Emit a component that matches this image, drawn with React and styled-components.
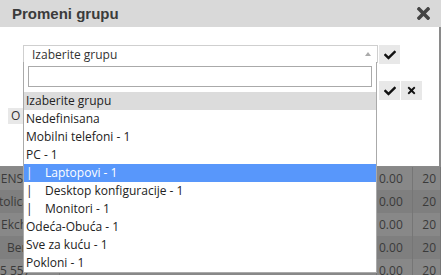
import React from "react";
import styled, { createGlobalStyle } from "styled-components";
import { FaCheck, FaTimes } from "react-icons/fa";

const GlobalStyle = createGlobalStyle`
  body {
    margin: 0;
    background: #8a8a8a;
    font-family: "Open Sans", "Liberation Sans", sans-serif;
    overflow: hidden;
  }
`;

const Page = styled.div`
  position: relative;
  width: 441px;
  height: 275px;
  overflow: hidden;
`;

const Table = styled.div`
  display: flex;
  flex-direction: column;
  padding-top: 167px;
`;

const Row = styled.div`
  display: grid;
  grid-template-columns: 60px 317px 36px 28px;
  height: 23px;
  background: ${({ $odd }) => ($odd ? "#7f7f7f" : "#888888")};
  color: #3a3a3a;
  font-size: 12px;
  line-height: 23px;
`;

const Cell = styled.div`
  overflow: hidden;
  white-space: nowrap;
  padding-left: 2px;
  border-right: 1px solid #767676;
  text-align: ${({ $right }) => ($right ? "right" : "left")};
  padding-right: ${({ $right }) => ($right ? "4px" : "0")};
`;

const Modal = styled.div`
  position: absolute;
  top: 0;
  left: 0;
  width: 439px;
  height: 166px;
  background: #fff;
  display: flex;
  flex-direction: column;
`;

const Header = styled.div`
  height: 27px;
  width: 441px;
  background: #d9d9d9;
  display: flex;
  align-items: center;
  justify-content: space-between;
  padding: 0 8px 0 12px;
  box-sizing: border-box;
`;

const Title = styled.h3`
  margin: 0;
  font-family: "Liberation Sans", Arial, sans-serif;
  font-size: 15px;
  font-weight: bold;
  color: #3b3b3b;
`;

const Close = styled.button`
  all: unset;
  display: flex;
  color: #444;
  font-size: 19px;
`;

const Body = styled.div`
  position: relative;
  padding: 18px 0 0 23px;
`;

const SelectRow = styled.div`
  display: flex;
  gap: 1px;
`;

const SelectBox = styled.div`
  width: 355px;
  height: 18px;
  border: 1px solid #cfcfcf;
  box-sizing: border-box;
  display: flex;
  align-items: center;
  justify-content: space-between;
  padding: 0 6px 0 8px;
  font-size: 12px;
  color: #333;
`;

const Arrow = styled.span`
  width: 0;
  height: 0;
  border-left: 3px solid transparent;
  border-right: 3px solid transparent;
  border-bottom: 4px solid #aaa;
`;

const IconBtn = styled.button`
  all: unset;
  width: 21px;
  height: 19px;
  background: #e8e8e8;
  display: flex;
  align-items: center;
  justify-content: center;
  color: #111;
  font-size: ${({ $small }) => ($small ? "11px" : "12px")};
`;

const SecondRow = styled.div`
  display: flex;
  gap: 1px;
  margin: 17px 0 0 356px;
`;

const OBtn = styled.div`
  position: absolute;
  left: 8px;
  top: 108px;
  width: 16px;
  height: 16px;
  background: #e8e8e8;
  font-size: 12px;
  line-height: 16px;
  padding-left: 3px;
  box-sizing: border-box;
  color: #333;
`;

const Dropdown = styled.div`
  position: absolute;
  left: 23px;
  top: 62px;
  width: 354px;
  height: 211px;
  background: #fff;
  border: 1px solid #aaa;
  border-top: none;
  box-sizing: border-box;
  display: flex;
  flex-direction: column;
`;

const Search = styled.div`
  margin: 4px 4px 5px 4px;
  height: 21px;
  border: 1px solid #aaa;
  box-sizing: border-box;
`;

const Option = styled.div`
  height: 18px;
  line-height: 18px;
  font-size: 12px;
  padding-left: 2px;
  white-space: pre;
  color: ${({ $active }) => ($active ? "#fff" : "#222")};
  background: ${({ $active, $current }) =>
    $active ? "#5897fb" : $current ? "#dcdcdc" : "transparent"};
`;

const rows = [
  { text: "DIMENS", shift: -24, odd: false },
  { text: "Katolica", shift: -17, odd: true },
  { text: "Ekch", shift: -1, odd: false },
  { text: "Berl", shift: 5, odd: true },
  { text: "5 557", shift: -2, odd: false },
];

const options = [
  { label: "Izaberite grupu", current: true },
  { label: "Nedefinisana" },
  { label: "Mobilni telefoni - 1" },
  { label: "PC - 1" },
  { label: "|    Laptopovi - 1", active: true },
  { label: "|    Desktop konfiguracije - 1" },
  { label: "|    Monitori - 1" },
  { label: "Odeća-Obuća - 1" },
  { label: "Sve za kuću - 1" },
  { label: "Pokloni - 1" },
];

export default function App() {
  return (
    <Page>
      <GlobalStyle />
      <Table>
        {rows.map((r, i) => (
          <Row key={i} $odd={r.odd}>
            <Cell>
              <span style={{ marginLeft: r.shift }}>{r.text}</span>
            </Cell>
            <Cell />
            <Cell>0.00</Cell>
            <Cell $right>20</Cell>
          </Row>
        ))}
      </Table>
      <Modal>
        <Header>
          <Title>Promeni grupu</Title>
          <Close>
            <FaTimes />
          </Close>
        </Header>
        <Body>
          <SelectRow>
            <SelectBox>
              <span>Izaberite grupu</span>
              <Arrow />
            </SelectBox>
            <IconBtn>
              <FaCheck />
            </IconBtn>
          </SelectRow>
          <SecondRow>
            <IconBtn>
              <FaCheck />
            </IconBtn>
            <IconBtn $small>
              <FaTimes />
            </IconBtn>
          </SecondRow>
        </Body>
        <OBtn>O</OBtn>
      </Modal>
      <Dropdown>
        <Search />
        {options.map((o) => (
          <Option key={o.label} $active={o.active} $current={o.current}>
            {o.label}
          </Option>
        ))}
      </Dropdown>
    </Page>
  );
}
